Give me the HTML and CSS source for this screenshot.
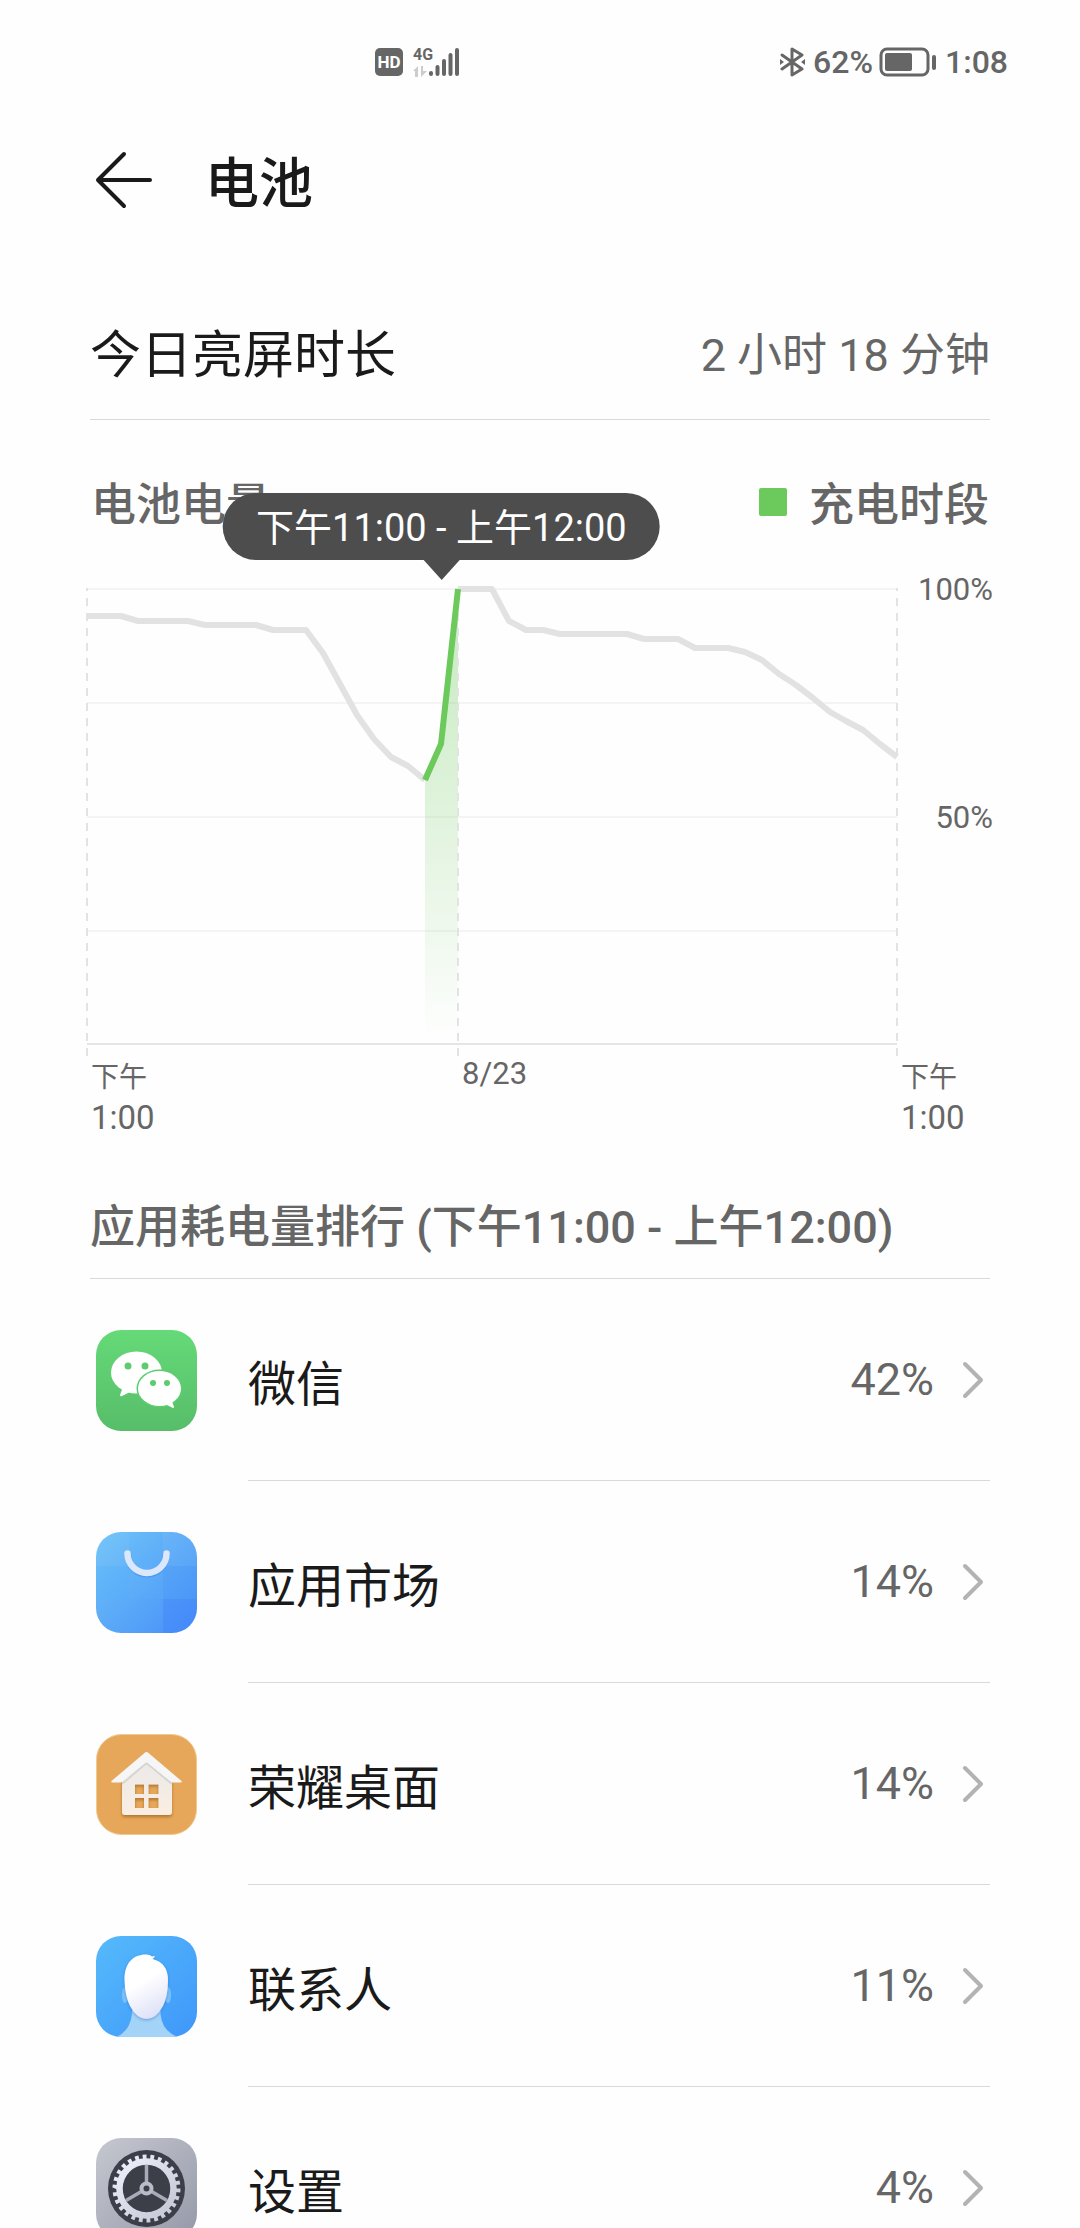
FILE: index.html
```html
<!DOCTYPE html>
<html lang="zh-CN">
<head>
  <meta charset="UTF-8" />
  <meta name="viewport" content="width=device-width, initial-scale=1" />
  <title>电池</title>
  <link rel="stylesheet" href="styles.css">
</head>
<body>
  <div class="screen">

    <!-- Status bar -->
    <div class="status-bar">
      <div class="status-group">
        <span class="hd">HD</span>
        <div class="network">
          <span class="network-type">4G</span>
          <svg class="data-arrows" width="14" height="11" viewBox="0 0 14 11" fill="#cccccc">
            <path d="M5 0v11H2V5H0z M8 0h2v5h4l-6 6z" />
          </svg>
        </div>
        <svg class="signal" width="32" height="30" viewBox="0 0 32 30" stroke="#666666" stroke-width="4" stroke-linecap="round">
          <path d="M3 26v1M9.500 20v7M16 14v13M22.500 8v19M29 3v24" />
        </svg>
      </div>
      <div class="status-group">
        <svg width="25" height="30" viewBox="0 0 25 30" fill="none" stroke="#666666" stroke-width="3" stroke-linejoin="round" stroke-linecap="round">
          <path d="M2 8l20 14-10 6V2l10 6L2 22" />
          <path d="M0 12l4 3-4 3zM25 12l-4 3 4 3z" fill="#666666" stroke="none" />
        </svg>
        <span class="status-text percent">62%</span>
        <svg width="58" height="30" viewBox="0 0 58 30">
          <rect x="2" y="2" width="47" height="26" rx="6" fill="none" stroke="#666666" stroke-width="3" />
          <rect x="6" y="6" width="27" height="18" rx="2" fill="#666666" />
          <rect x="53" y="8" width="4" height="15" rx="2" fill="#666666" />
        </svg>
        <span class="status-text">1:08</span>
      </div>
    </div>

    <header class="header">
      <button class="back" aria-label="返回">
        <svg width="58" height="58" viewBox="0 0 58 58" fill="none" stroke="#1a1a1a" stroke-width="4" stroke-linecap="round" stroke-linejoin="round">
          <path d="M29 3L3 29l26 26M3 29h52" />
        </svg>
      </button>
      <h1>电池</h1>
    </header>

    <main>
      <div class="summary">
        <span class="summary-label">今日亮屏时长</span>
        <span class="summary-value">2 小时 18 分钟</span>
      </div>

      <!-- Battery level chart -->
      <section class="chart">
        <div class="chart-head">
          <h2>电池电量</h2>
          <span class="legend">充电时段</span>
        </div>
        <div class="chart-body">
          <div class="plot">
            <svg viewBox="0 0 810 468">
              <defs>
                <linearGradient id="charge" x1="0" y1="0" x2="0" y2="1">
                  <stop offset="0" stop-color="#6cc95b" stop-opacity="0.4" />
                  <stop offset="1" stop-color="#6cc95b" stop-opacity="0" />
                </linearGradient>
              </defs>
              <path class="grid" d="M0 1H810M0 115H810M0 229H810M0 343H810" />
              <path class="base" d="M0 456H810" />
              <path fill="url(#charge)" d="M338 193L354 156L371 1V456H338z" />
              <path class="dash" d="M0 468V0M371 468V0M810 468V0" />
              <polyline class="level" points="0,28 34,28 51,33 101,33 118,37 169,37 186,42 219,42 236,65 253,96 270,127 287,151 304,169 321,178 338,192" />
              <polyline class="level" points="371,1 405,1 422,33 439,42 456,42 473,46 540,46 557,51 591,51 608,60 641,60 658,64 675,72 692,86 709,97 726,110 743,124 759,133 776,142 793,156 810,169" />
              <polyline class="level charging" points="338,192 354,156 371,1" />
            </svg>
            <div class="tooltip">下午11:00 - 上午12:00</div>
          </div>
          <div class="y-axis">
            <span>100%</span>
            <span>50%</span>
          </div>
        </div>
        <div class="x-axis">
          <div><span class="period">下午</span><span class="time">1:00</span></div>
          <div><span class="date">8/23</span></div>
          <div><span class="period">下午</span><span class="time">1:00</span></div>
        </div>
      </section>

      <!-- App ranking -->
      <section class="ranking">
        <h2>应用耗电量排行 (下午11:00 - 上午12:00)</h2>
        <ul class="apps">
          <li>
            <a class="app" href="#wechat">
              <svg class="app-icon" viewBox="0 0 101 101">
                <defs>
                  <linearGradient id="wechat-bg" x1="0" y1="0" x2="0" y2="1">
                    <stop offset="0" stop-color="#65da78" />
                    <stop offset="1" stop-color="#57bd69" />
                  </linearGradient>
                </defs>
                <rect width="101" height="101" rx="25" fill="url(#wechat-bg)" />
                <ellipse cx="40.500" cy="42.500" rx="25.500" ry="21" fill="#fff" />
                <path d="M27 57l-3 8q0 2 2 1l8-4z" fill="#fff" />
                <ellipse cx="63.500" cy="58.500" rx="23" ry="19" fill="#5dcc70" />
                <ellipse cx="63.500" cy="58.500" rx="21.500" ry="17.500" fill="#fff" />
                <path d="M69 74l8 4q1 0 1-1l-2-6z" fill="#fff" />
                <g fill="#5dcc70">
                  <circle cx="32" cy="36" r="3.500" />
                  <circle cx="49" cy="36" r="3.500" />
                  <circle cx="57" cy="53" r="3" />
                  <circle cx="71" cy="53" r="3" />
                </g>
              </svg>
              <span class="app-row">
                <span class="app-name">微信</span>
                <span class="app-value">42%</span>
                <svg class="chevron" viewBox="0 0 22 38"><path d="M3 3l16 16L3 35" /></svg>
              </span>
            </a>
          </li>
          <li>
            <a class="app" href="#market">
              <svg class="app-icon" viewBox="0 0 101 101">
                <defs>
                  <linearGradient id="market-bg" x1="0" y1="0" x2="1" y2="1">
                    <stop offset="0" stop-color="#70c4f8" />
                    <stop offset="1" stop-color="#468ff8" />
                  </linearGradient>
                  <clipPath id="market-clip"><rect width="101" height="101" rx="25" /></clipPath>
                </defs>
                <g clip-path="url(#market-clip)">
                  <rect width="101" height="101" fill="url(#market-bg)" />
                  <path d="M0 0h33v34H0zM67 0h34v34H67z" fill="#fff" opacity="0.04" />
                  <path d="M0 34h33v33H0z" fill="#4fb4ff" opacity="0.2" />
                  <path d="M33 34h34v33H33z" fill="#7cc4ff" opacity="0.06" />
                  <path d="M67 34h34v33H67z" fill="#3d8cf5" opacity="0.12" />
                  <path d="M67 67h34v34H67z" fill="#3a7cfb" opacity="0.3" />
                </g>
                <path d="M32 23a19 19 0 0 0 38 0" fill="none" stroke="#2f78d8" stroke-opacity="0.3" stroke-width="7" stroke-linecap="round" />
                <path d="M31.500 21.500a19.500 19.500 0 0 0 39 0" fill="none" stroke="#dbe8fc" stroke-width="6.500" stroke-linecap="round" />
              </svg>
              <span class="app-row">
                <span class="app-name">应用市场</span>
                <span class="app-value">14%</span>
                <svg class="chevron" viewBox="0 0 22 38"><path d="M3 3l16 16L3 35" /></svg>
              </span>
            </a>
          </li>
          <li>
            <a class="app" href="#launcher">
              <svg class="app-icon" viewBox="0 0 101 101">
                <defs>
                  <linearGradient id="house" x1="0" y1="0" x2="0" y2="1">
                    <stop offset="0" stop-color="#e9e9e9" />
                    <stop offset="1" stop-color="#fbeee2" />
                  </linearGradient>
                  <filter id="house-shadow" x="-20%" y="-20%" width="140%" height="140%">
                    <feDropShadow dx="0" dy="2" stdDeviation="1.500" flood-color="#8a5515" flood-opacity="0.6" />
                  </filter>
                </defs>
                <rect x="0.500" y="0.500" width="100" height="100" rx="25" fill="#e7a75a" stroke="#f0c98f" />
                <g filter="url(#house-shadow)">
                  <path fill="url(#house)" fill-rule="evenodd" d="M50.500 24L76 44V78q0 3-3 3H29q-3 0-3-3V44zM39 50.500v9.500h9v-9.500zM52.500 50.500v9.500h10v-9.500zM39 64v10h9V64zM52.500 64v10h10V64z" />
                </g>
                <path d="M50.500 29L26 50M50.500 29L76 50" stroke="#c9c6c2" stroke-width="2" opacity="0.6" />
                <path fill="#f6f6f6" d="M48.500 19q2-2 4 0L85.500 47q1 1.500-1 1.500H76L50.500 28 25 48.500H16.500q-2 0-1-1.500z" />
              </svg>
              <span class="app-row">
                <span class="app-name">荣耀桌面</span>
                <span class="app-value">14%</span>
                <svg class="chevron" viewBox="0 0 22 38"><path d="M3 3l16 16L3 35" /></svg>
              </span>
            </a>
          </li>
          <li>
            <a class="app" href="#contacts">
              <svg class="app-icon" viewBox="0 0 101 101">
                <defs>
                  <linearGradient id="contacts-bg" x1="0" y1="0" x2="1" y2="1">
                    <stop offset="0" stop-color="#55bafb" />
                    <stop offset="1" stop-color="#3f97fa" />
                  </linearGradient>
                  <linearGradient id="face" x1="0.300" y1="0" x2="0.700" y2="1">
                    <stop offset="0.400" stop-color="#ffffff" />
                    <stop offset="1" stop-color="#dcdff7" />
                  </linearGradient>
                  <filter id="face-shadow" x="-20%" y="-20%" width="140%" height="140%">
                    <feDropShadow dx="0" dy="1" stdDeviation="1.500" flood-color="#1d66b8" flood-opacity="0.5" />
                  </filter>
                </defs>
                <rect width="101" height="101" rx="25" fill="url(#contacts-bg)" />
                <path d="M36 74V78Q34 95 21 100.500Q24 101 27 101H74Q78 101 81 100.500Q66 95 64.500 78V74z" fill="#a3d3f6" />
                <ellipse cx="29" cy="59" rx="3" ry="8" fill="#7cc0f8" />
                <ellipse cx="72" cy="59" rx="3" ry="8" fill="#7cc0f8" />
                <path filter="url(#face-shadow)" fill="url(#face)" d="M50 18.500Q54 18.500 56 20.500L59 20Q58 22 56.500 23Q72 27 72 44Q72 60 67 70Q60 83 50.500 83Q41 83 34 70Q29 60 28.500 44C28.500 27 37 18.500 50 18.500z" />
              </svg>
              <span class="app-row">
                <span class="app-name">联系人</span>
                <span class="app-value">11%</span>
                <svg class="chevron" viewBox="0 0 22 38"><path d="M3 3l16 16L3 35" /></svg>
              </span>
            </a>
          </li>
          <li>
            <a class="app" href="#settings">
              <svg class="app-icon" viewBox="0 0 101 101">
                <defs>
                  <linearGradient id="settings-bg" x1="0" y1="0" x2="1" y2="1">
                    <stop offset="0" stop-color="#c5c8d0" />
                    <stop offset="1" stop-color="#9599a8" />
                  </linearGradient>
                  <linearGradient id="gear" x1="0" y1="0" x2="1" y2="1">
                    <stop offset="0" stop-color="#eef0fa" />
                    <stop offset="1" stop-color="#c3c6d4" />
                  </linearGradient>
                </defs>
                <rect width="101" height="101" rx="25" fill="url(#settings-bg)" />
                <circle cx="50.500" cy="50.500" r="38.500" fill="#3c3f48" />
                <circle cx="50.500" cy="50.500" r="27" fill="none" stroke="url(#gear)" stroke-width="6.500" />
                <circle cx="50.500" cy="50.500" r="31.500" fill="none" stroke="url(#gear)" stroke-width="5" pathLength="52" stroke-dasharray="1 1" />
                <path d="M50.500 50.500V27M50.500 50.500L30 62.500M50.500 50.500L71 62.500" stroke="#a9acb8" stroke-width="3.500" />
                <circle cx="50.500" cy="50.500" r="5" fill="#3c3f48" stroke="#b9bcc8" stroke-width="4" />
              </svg>
              <span class="app-row">
                <span class="app-name">设置</span>
                <span class="app-value">4%</span>
                <svg class="chevron" viewBox="0 0 22 38"><path d="M3 3l16 16L3 35" /></svg>
              </span>
            </a>
          </li>
        </ul>
      </section>
    </main>
  </div>
</body>
</html>
```

FILE: styles.css
```css
:root {
  --bg-color: #fefefe;
  --text-color: #1a1a1a;
  --muted-color: #666666;
  --line-color: #d9d9d9;
  --green: #6cc95b;
}

* {
  box-sizing: border-box;
}

body {
  margin: 0;
  background: var(--bg-color);
  color: var(--text-color);
  font-family: Roboto, "Noto Sans CJK SC", sans-serif;
}

h1, h2, ul {
  margin: 0;
  padding: 0;
}

h1, h2 {
  font-weight: 500;
}

svg {
  display: block;
  flex-shrink: 0;
}

.screen {
  height: 100vh;
  overflow: hidden;
}

/* Status bar */
.status-bar {
  display: flex;
  justify-content: space-between;
  align-items: center;
  height: 124px;
  padding: 0 72px 0 375px;
  color: var(--muted-color);
}

.status-group {
  display: flex;
  align-items: center;
}

.hd {
  width: 28px;
  margin-right: 10px;
  border-radius: 5px;
  background: var(--muted-color);
  color: #fff;
  font-size: 17px;
  font-weight: 700;
  line-height: 28px;
  text-align: center;
}

.network {
  width: 15px;
  height: 30px;
}

.network-type {
  display: block;
  font-size: 16px;
  font-weight: 700;
  line-height: 16px;
}

.data-arrows {
  margin-top: 3px;
}

.status-text {
  font-size: 32px;
  font-weight: 500;
  line-height: 40px;
}

.percent {
  margin: 0 6px 0 8px;
}

.status-text:last-child {
  margin-left: 8px;
}

/* Header */
.header {
  display: flex;
  align-items: center;
  gap: 52px;
  height: 112px;
  padding: 0 95px;
}

.back {
  padding: 0;
  border: none;
  background: none;
  cursor: pointer;
}

h1 {
  padding-top: 10px;
  font-size: 54px;
  line-height: 72px;
}

.summary {
  display: flex;
  justify-content: space-between;
  align-items: center;
  height: 132px;
  margin: 52px 90px 0;
  padding-bottom: 5px;
  border-bottom: 1px solid var(--line-color);
}

.summary-label {
  font-size: 51px;
}

.summary-value {
  color: var(--muted-color);
  font-size: 45px;
}

/* Chart */
h2 {
  color: var(--muted-color);
  font-size: 45px;
  line-height: 60px;
}

.chart {
  padding: 52px 87px 0;
  color: var(--muted-color);
}

.chart-head {
  display: flex;
  justify-content: space-between;
  align-items: center;
  height: 68px;
  margin-bottom: 48px;
  padding: 0 4px;
}

.legend {
  display: flex;
  align-items: center;
  gap: 22px;
  font-size: 45px;
  font-weight: 500;
  line-height: 60px;
}

.legend::before {
  content: "";
  width: 28px;
  height: 28px;
  margin-bottom: 8px;
  border-radius: 2px;
  background: var(--green);
}

.chart-body {
  display: flex;
}

.plot {
  position: relative;
  flex: 1;
}

.plot svg {
  width: 100%;
  overflow: visible;
}

.grid {
  stroke: #f4f4f4;
  stroke-width: 2;
}

.base {
  stroke: #e5e5e5;
  stroke-width: 2;
}

.dash {
  stroke: #e3e3e3;
  stroke-width: 2;
  stroke-dasharray: 8 7;
}

.level {
  fill: none;
  stroke: #e2e2e2;
  stroke-width: 6;
  stroke-linejoin: round;
}

.level.charging {
  stroke: var(--green);
}

.tooltip {
  position: absolute;
  left: 43.75%;
  bottom: 100%;
  margin-bottom: 28px;
  padding: 4px 33px 0;
  border-radius: 34px;
  background: #4d4d4d;
  color: #fff;
  font-size: 38px;
  line-height: 63px;
  white-space: nowrap;
  transform: translateX(-50%);
}

.tooltip::after {
  content: "";
  position: absolute;
  top: 100%;
  left: 50%;
  border: 18px solid transparent;
  border-top: 20px solid #4d4d4d;
  border-bottom: none;
  transform: translateX(-50%);
}

.y-axis {
  display: flex;
  flex-direction: column;
  gap: 190px;
  width: 96px;
  margin-top: -17px;
  font-size: 31px;
  line-height: 38px;
  text-align: right;
}

.x-axis {
  display: grid;
  grid-template-columns: 371fr 439fr 96px;
}

.x-axis div {
  padding-left: 4px;
}

.x-axis span {
  display: block;
}

.period {
  font-size: 28px;
  line-height: 43px;
}

.time {
  font-size: 33px;
  line-height: 37px;
}

.date {
  font-size: 31px;
  line-height: 36px;
}

/* App ranking */
.ranking {
  padding: 62px 90px 0;
}

.ranking h2 {
  padding-bottom: 20px;
  border-bottom: 1px solid var(--line-color);
}

.apps {
  list-style: none;
}

.app {
  display: flex;
  align-items: center;
  gap: 51px;
  height: 202px;
  padding-left: 6px;
  color: inherit;
  text-decoration: none;
}

.app-icon {
  width: 101px;
  height: 101px;
}

.app-row {
  display: flex;
  flex: 1;
  align-items: center;
  height: 100%;
  border-bottom: 1px solid var(--line-color);
}

.app-name {
  flex: 1;
  font-size: 48px;
}

.app-value {
  margin-right: 28px;
  color: var(--muted-color);
  font-size: 45px;
}

.chevron {
  width: 22px;
  height: 38px;
  margin-right: 6px;
  fill: none;
  stroke: #b3b3b3;
  stroke-width: 4;
  stroke-linecap: round;
  stroke-linejoin: round;
}
```
